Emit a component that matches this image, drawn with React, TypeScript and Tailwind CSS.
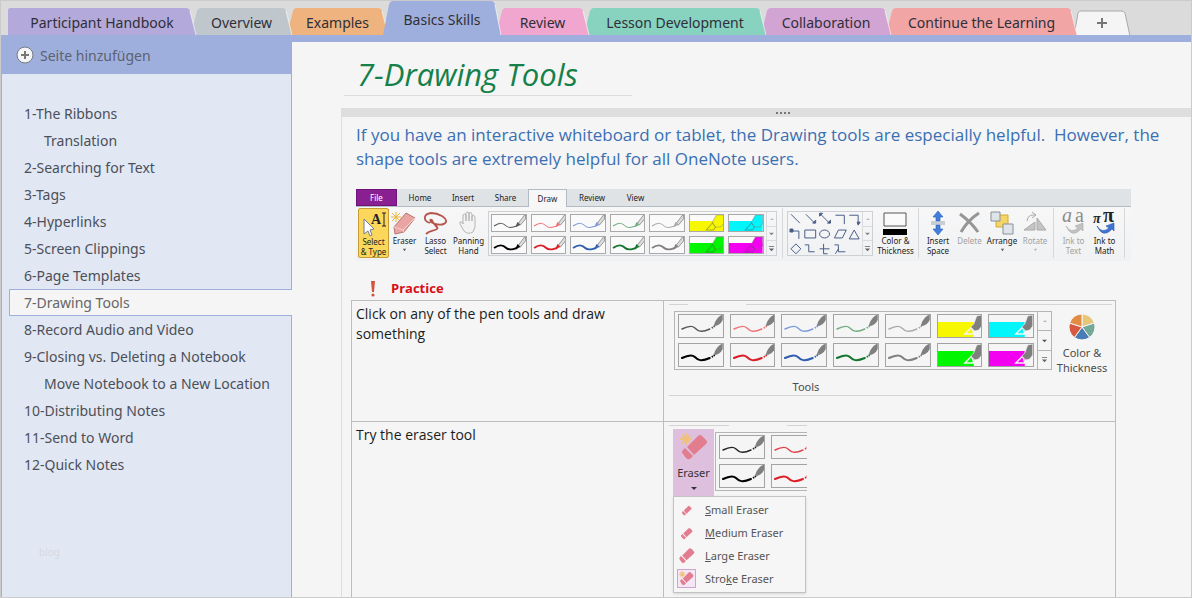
import type { ReactNode } from 'react';
import { clsx } from 'clsx';

interface Section {
  name: string;
  width: string;
  fill: string;
  bg: string;
  z: string;
  active?: boolean;
}

const sections: Section[] = [
  { name: 'Participant Handbook', width: 'w-[188px]', fill: 'fill-[#b3aadb]', bg: 'bg-[#b3aadb]', z: 'z-[8]' },
  { name: 'Overview', width: 'w-[101px]', fill: 'fill-[#bfc6cc]', bg: 'bg-[#bfc6cc]', z: 'z-[7]' },
  { name: 'Examples', width: 'w-[101px]', fill: 'fill-[#eeb37e]', bg: 'bg-[#eeb37e]', z: 'z-[6]' },
  { name: 'Basics Skills', width: 'w-[118px]', fill: 'fill-[#9fafdd]', bg: 'bg-[#9fafdd]', z: 'z-[9]', active: true },
  { name: 'Review', width: 'w-[93px]', fill: 'fill-[#f0a6cf]', bg: 'bg-[#f0a6cf]', z: 'z-[5]' },
  { name: 'Lesson Development', width: 'w-[182px]', fill: 'fill-[#88d3c0]', bg: 'bg-[#88d3c0]', z: 'z-[4]' },
  { name: 'Collaboration', width: 'w-[130px]', fill: 'fill-[#d2a4d3]', bg: 'bg-[#d2a4d3]', z: 'z-[3]' },
  { name: 'Continue the Learning', width: 'w-[191px]', fill: 'fill-[#f1a5a5]', bg: 'bg-[#f1a5a5]', z: 'z-[2]' },
];

const pages = [
  { title: '1-The Ribbons' },
  { title: 'Translation', sub: true },
  { title: '2-Searching for Text' },
  { title: '3-Tags' },
  { title: '4-Hyperlinks' },
  { title: '5-Screen Clippings' },
  { title: '6-Page Templates' },
  { title: '7-Drawing Tools', current: true },
  { title: '8-Record Audio and Video' },
  { title: '9-Closing vs. Deleting a Notebook' },
  { title: 'Move Notebook to a New Location', sub: true },
  { title: '10-Distributing Notes' },
  { title: '11-Send to Word' },
  { title: '12-Quick Notes' },
];

interface Tool {
  name: string;
  color: string;
  bold?: boolean;
  marker?: boolean;
}

const tools: Tool[] = [
  { name: 'Black pen', color: '#555555' },
  { name: 'Red pen', color: '#ee7377' },
  { name: 'Blue pen', color: '#7a9bd8' },
  { name: 'Green pen', color: '#6fae80' },
  { name: 'Gray pen', color: '#aaaaaa' },
  { name: 'Yellow highlighter', color: '#f7f700', marker: true },
  { name: 'Cyan highlighter', color: '#00f6fb', marker: true },
  { name: 'Thick black pen', color: '#000000', bold: true },
  { name: 'Thick red pen', color: '#dc1e26', bold: true },
  { name: 'Thick blue pen', color: '#2f5eb0', bold: true },
  { name: 'Thick green pen', color: '#12752f', bold: true },
  { name: 'Thick gray pen', color: '#808080', bold: true },
  { name: 'Green highlighter', color: '#00f500', marker: true },
  { name: 'Magenta highlighter', color: '#f400f0', marker: true },
];

const eraserTools: Tool[] = [
  { name: 'Black pen', color: '#222222' },
  { name: 'Red pen', color: '#e0434a' },
  tools[7],
  tools[8],
];

export default function App() {
  return (
    <div className="flex min-h-screen flex-col border border-[#cbcbcb] bg-[#f5f5f5] font-['Open_Sans','Noto_Sans',sans-serif] text-[#333]">
      <SectionTabs />
      <div className="flex flex-1">
        <PageList />
        <main className="min-w-0 flex-1 border-t-[7px] border-[#9fafdd]">
          <h1 className="ml-[52px] h-[54px] w-[288px] border-b border-[#dcdcdc] pl-[13px] text-[31px] leading-[64px] whitespace-nowrap text-[#15804a] italic">
            7-Drawing Tools
          </h1>
          <NoteContainer />
        </main>
      </div>
    </div>
  );
}

function SectionTabs() {
  return (
    <nav
      aria-label="Sections"
      className="flex h-[34px] items-end bg-[#dbdbdb] pl-[7px] font-['Noto_Sans','Open_Sans',sans-serif]"
    >
      {sections.map((s, i) => (
        <button
          key={s.name}
          className={clsx(
            'relative flex shrink-0 text-[14px] whitespace-nowrap text-[#2f2f38]',
            s.active ? 'h-[34px]' : 'h-[27px]',
            i > 0 && '-ml-[5px]',
            s.width,
            s.z
          )}
        >
          <svg viewBox="0 0 10 27" preserveAspectRatio="none" className={clsx('h-full w-[10px]', s.fill)}>
            <path d={i === 0 ? 'M0 27V2Q0 0 3 0H10V27Z' : 'M0 27L6 3Q7 0 10 0V27Z'} />
          </svg>
          <span className={clsx('flex h-full flex-1 items-center justify-center pt-[2px]', s.bg)}>{s.name}</span>
          <svg viewBox="0 0 10 27" preserveAspectRatio="none" className={clsx('h-full w-[10px] overflow-visible', s.fill)}>
            <path d="M0 0Q3 0 4 3L10 27H0Z" />
            <path d="M4 3L10 27" className="fill-none stroke-white/60" />
          </svg>
        </button>
      ))}
      <button aria-label="New section" className="relative z-[1] -ml-[4px] h-[25px] w-[58px] shrink-0">
        <svg viewBox="0 0 58 25" className="h-full w-full">
          <path d="M1 26L5 3Q6 1 8 1H48Q51 1 52 3L57 26" fill="#f5f5f5" stroke="#a9a9a9" />
          <path d="M24 13H34M29 8V18" stroke="#777" strokeWidth="2" />
        </svg>
      </button>
    </nav>
  );
}

function PageList() {
  return (
    <aside className="flex w-[291px] shrink-0 flex-col border-l border-[#9fafdd] bg-[#e1e7f3] font-['Noto_Sans','Open_Sans',sans-serif] text-[14px]">
      <button className="flex h-[39px] items-center gap-[6px] bg-[#9fafdd] pl-[14px] text-[#5c6270]">
        <svg viewBox="0 0 18 18" className="h-[18px] w-[18px]">
          <circle cx="9" cy="9" r="8" fill="#f5f5f5" stroke="#747a85" />
          <path d="M5 9H13M9 5V13" stroke="#777" strokeWidth="2" />
        </svg>
        <span className="pt-[2px]">Seite hinzufügen</span>
      </button>
      <nav aria-label="Pages" className="flex flex-1 flex-col">
        <div className="h-[26px] border-r border-[#9fafdd]" />
        {pages.map((p) => (
          <a
            key={p.title}
            href="#"
            aria-current={p.current ? 'page' : undefined}
            className={clsx(
              'flex h-[27px] items-center whitespace-nowrap',
              p.current
                ? 'ml-[7px] border-y border-l border-[#9fafdd] bg-[#f5f5f5] pl-[14px] text-[#666]'
                : 'border-r border-[#9fafdd] text-[#4c4f58]',
              !p.current && (p.sub ? 'pl-[42px]' : 'pl-[22px]')
            )}
          >
            {p.title}
          </a>
        ))}
        <div className="flex-1 border-r border-[#9fafdd] pt-[67px] pl-[37px] text-[10px] text-[#d5d9e2]">blog</div>
      </nav>
    </aside>
  );
}

function NoteContainer() {
  return (
    <section className="mt-[12px] ml-[49px] border-l border-[#dedede]">
      <div className="flex h-[9px] items-center justify-center gap-[2px] bg-[#dedede] pl-[32px]">
        <Dot />
        <Dot />
        <Dot />
        <Dot />
      </div>
      <p className="mt-[6px] pr-[10px] pl-[14px] text-[17px] leading-[24px] text-[#3a6fb3]">
        If you have an interactive whiteboard or tablet, the Drawing tools are especially helpful.&nbsp; However, the
        shape tools are extremely helpful for all OneNote users.
      </p>
      <Ribbon />
      <div className="mt-[18px] flex h-[20px] items-center gap-[15px] pl-[28px]">
        <svg viewBox="0 0 6 16" className="h-[16px] w-[6px] fill-[#d2553a]">
          <path d="M1 0H5L4 11H2Z" />
          <circle cx="3" cy="14" r="1.6" />
        </svg>
        <h2 className="text-[13px] font-bold text-[#d80f14]">Practice</h2>
      </div>
      <table className="mt-px ml-[9px] w-[765px] table-fixed border-collapse text-[14px] leading-[20px] text-[#1c1c1c]">
        <tbody>
          <tr className="h-[121px]">
            <td className="w-[312px] border border-[#bdbdbd] px-[4px] pt-[3px] align-top">
              Click on any of the pen tools and draw something
            </td>
            <td className="border border-[#bdbdbd] p-0 align-top">
              <ToolsClip />
            </td>
          </tr>
          <tr>
            <td className="border border-b-0 border-[#bdbdbd] px-[4px] pt-[3px] align-top">Try the eraser tool</td>
            <td className="border border-b-0 border-[#bdbdbd] p-0 pb-[4px] align-top">
              <EraserClip />
            </td>
          </tr>
        </tbody>
      </table>
    </section>
  );
}

function Dot() {
  return <span className="h-[2px] w-[2px] bg-[#777]" />;
}

// OneNote 2010 ribbon
function Ribbon() {
  return (
    <div className="mt-[18px] ml-[14px] w-[775px] font-['Noto_Sans','Open_Sans',sans-serif] text-[8px] text-[#222]">
      <div className="flex h-[18px] border-b border-[#b3bac2] bg-[#dfe3e6]">
        <button className="w-[41px] border border-[#6d1379] bg-[#8a1f92] text-white">File</button>
        <RibbonTab className="w-[46px]">Home</RibbonTab>
        <RibbonTab className="w-[40px]">Insert</RibbonTab>
        <RibbonTab className="w-[45px]">Share</RibbonTab>
        <button className="-mb-px w-[39px] border border-b-0 border-[#b3bac2] bg-[#f7f7f8]">Draw</button>
        <RibbonTab className="w-[50px]">Review</RibbonTab>
        <RibbonTab className="w-[37px]">View</RibbonTab>
      </div>
      <div className="flex h-[54px] items-start bg-linear-to-b from-[#f7f7f8] to-[#f0f1f2] pt-px pl-[2px]">
        <RibbonButton label={['Select', '& Type']} className="h-[50px] w-[31px] rounded-xs border border-[#c79b35] bg-[#fbd75c]">
          <path d="M4 8V23L8 20L10 25L12 24L10 19L14 18Z" fill="#fff" stroke="#6f7d92" />
          <text x="11" y="13" className="fill-[#222] font-['Liberation_Serif',serif] text-[14px] font-bold">A</text>
          <path d="M22 2H26M24 2V15M22 15H26" stroke="#222" fill="none" />
        </RibbonButton>
        <RibbonButton label={['Eraser']} arrow className="w-[31px]">
          <path d="M5 2V12M0 7H10M1 3L9 11M9 3L1 11" stroke="#eab53a" />
          <path d="M3 17L15 3L24 8L13 22L4 24Z" fill="#e9a5a3" stroke="#b87873" />
          <path d="M3 17L12 20L24 8M12 20L13 22" stroke="#f8d1cd" fill="none" />
        </RibbonButton>
        <RibbonButton label={['Lasso', 'Select']} className="w-[31px]">
          <path
            d="M8 13C1 11 1 4 9 3C17 3 25 8 24 12C22 16 13 15 9 12C7 9 10 9 11 12C13 17 19 18 13 20C10 21 7 21 4 24"
            fill="none"
            stroke="#b6534a"
            strokeWidth="1.8"
          />
        </RibbonButton>
        <RibbonButton label={['Panning', 'Hand']} className="w-[35px]">
          <path
            d="M9 21L5 14Q4 11 7 12L8 14V5Q9 3 11 5V11V3Q12 1 14 3V11V3Q16 1 17 4V11V6Q19 4 20 7V17L18 22Q13 25 9 21Z"
            fill="#f3f3f3"
            stroke="#b5b5b5"
          />
        </RibbonButton>
        <div className="mt-[3px] ml-[2px] flex h-[45px] w-[289px] border border-[#cdd0d4]">
          <div className="grid w-[277px] grid-cols-7 gap-1 p-[2px]">
            {tools.map((t) => (
              <OldTool key={t.name} tool={t} />
            ))}
          </div>
          <Scroller className="w-[10px] border-[#d9dbde]" faded />
        </div>
        <Divider className="ml-[5px]" />
        <div className="mt-[3px] ml-[4px] flex h-[45px] w-[86px] border border-[#cdd0d4]">
          <svg viewBox="0 0 75 43" className="h-[43px] w-[75px] fill-none stroke-[#475c88]">
            <path d="M3 2L12 11M18 2L27 11M33 2L42 11M48 3H57V12M62 3H71V12" />
            <path d="M25 11H28V8ZM32 4V1H35ZM40 11H43V8ZM70 10H73L71 13ZM2 17H5V20H2Z" fill="#475c88" />
            <path d="M4 19H11V27M17 18H28V26H17ZM51 18H59L55 26H47ZM67 18L72 27H62Z" />
            <ellipse cx="37" cy="22" rx="5" ry="4" />
            <path d="M8 32L13 37L8 42L3 37ZM17 33H21V40H27M32 37H42M36 32V42H40M47 33H51V40H58M51 37L48 42" />
          </svg>
          <Scroller className="w-[10px] border-[#d9dbde]" faded />
        </div>
        <RibbonButton label={['Color &', 'Thickness']} className="w-[45px]">
          <path d="M2 3H24V16H2Z" fill="#fafafa" stroke="#555" />
          <path d="M1 19H25V25H1Z" fill="#000" />
        </RibbonButton>
        <Divider className="" />
        <RibbonButton label={['Insert', 'Space']} className="ml-[3px] w-[32px]">
          <path d="M13 1L18 7H15V11H11V7H8ZM13 25L18 19H15V15H11V19H8Z" fill="#3f7fe0" stroke="#2b5db0" strokeWidth=".6" />
          <path d="M6 12H20M6 14H20" stroke="#9aa6b5" />
        </RibbonButton>
        <RibbonButton label={['Delete']} className="w-[31px] text-[#a2a2a2]">
          <path d="M4 4Q15 12 22 22M23 3Q12 10 5 22" stroke="#969696" strokeWidth="3" fill="none" />
        </RibbonButton>
        <RibbonButton label={['Arrange']} arrow className="w-[34px]">
          <path d="M7 5H19V17H7Z" fill="#f5d565" stroke="#d2ac35" />
          <path d="M2 2H11V11H2ZM14 14H24V24H14Z" fill="#dfe4e9" stroke="#87909a" />
        </RibbonButton>
        <RibbonButton label={['Rotate']} arrow className="w-[32px] text-[#a2a2a2]">
          <path d="M2 20L13 12V20ZM15 8L24 20H15Z" fill="#c4c4c4" stroke="#aaa" />
          <path d="M5 11Q6 4 13 5M10 2L14 5L10 8" fill="none" stroke="#aaa" />
        </RibbonButton>
        <Divider className="ml-[2px]" />
        <RibbonButton label={['Ink to', 'Text']} className="ml-[4px] w-[31px] text-[#a2a2a2]">
          <text x="2" y="12" className="fill-[#8d8d8d] font-['Liberation_Serif',serif] text-[20px] italic">a</text>
          <text x="15" y="12" className="fill-[#8d8d8d] font-['Liberation_Serif',serif] text-[20px]">a</text>
          <path d="M6 16Q11 24 18 18L15 16L23 13V21L21 19Q12 29 6 16Z" fill="#c2c2c2" stroke="#aaa" strokeWidth=".6" />
        </RibbonButton>
        <RibbonButton label={['Ink to', 'Math']} className="w-[31px]">
          <text x="2" y="13" className="fill-[#222] font-['Liberation_Serif',serif] text-[14px] font-bold italic">π</text>
          <text x="12" y="12" className="fill-[#222] font-['Liberation_Serif',serif] text-[20px] font-bold">π</text>
          <path d="M6 16Q11 24 18 18L15 16L23 13V21L21 19Q12 29 6 16Z" fill="#3f74d4" stroke="#2b5db0" strokeWidth=".6" />
        </RibbonButton>
        <Divider className="ml-[4px]" />
      </div>
    </div>
  );
}

function RibbonTab({ children, className }: { children: ReactNode; className: string }) {
  return <button className={className}>{children}</button>;
}

function RibbonButton({
  children,
  label,
  arrow,
  className,
}: {
  children: ReactNode;
  label: string[];
  arrow?: boolean;
  className: string;
}) {
  return (
    <button className={clsx('flex shrink-0 flex-col items-center pt-[2px] leading-[10px] whitespace-nowrap', className)}>
      <svg viewBox="0 0 27 26" className="h-[26px] w-[27px] shrink-0 overflow-visible">
        {children}
      </svg>
      {label.map((line) => (
        <span key={line}>{line}</span>
      ))}
      {arrow && (
        <svg viewBox="0 0 6 6" className="mt-[2px] h-[5px] w-[5px] fill-current opacity-70">
          <path d="M1 1H5L3 4Z" />
        </svg>
      )}
    </button>
  );
}

function Divider({ className }: { className: string }) {
  return <div className={clsx('h-[50px] w-px shrink-0 bg-[#d5d8db]', className)} />;
}

function Scroller({ className, faded }: { className: string; faded?: boolean }) {
  return (
    <div className={clsx('flex flex-col border-l', className)}>
      <button aria-label="Scroll up" className="flex flex-1 items-center justify-center">
        <svg viewBox="0 0 6 6" className="h-[6px] w-[6px] fill-[#bbb]">
          <path d="M1 4H5L3 2Z" />
        </svg>
      </button>
      <button
        aria-label="Scroll down"
        className={clsx(
          'flex flex-1 items-center justify-center border-y',
          faded ? 'border-[#d9dbde]' : 'border-[#b5b5b5]'
        )}
      >
        <svg viewBox="0 0 6 6" className={clsx('h-[5px] w-[5px]', faded ? 'fill-[#888]' : 'fill-[#555]')}>
          <path d="M0 2H6L3 5Z" />
        </svg>
      </button>
      <button aria-label="More" className="flex flex-1 items-center justify-center">
        <svg viewBox="0 0 8 8" className="h-[7px] w-[7px] fill-[#666]">
          <path d="M1 1H7V2H1ZM1 4H7L4 7Z" />
        </svg>
      </button>
    </div>
  );
}

function OldTool({ tool }: { tool: Tool }) {
  return (
    <button aria-label={tool.name} className="h-[18px] border border-[#a9a9a9] bg-[#fafafa]">
      <svg viewBox="0 0 33 16" preserveAspectRatio="none" className="h-full w-full">
        {tool.marker ? (
          <>
            <path d="M0 6H33V16H0Z" fill={tool.color} />
            <path d="M33 0H26L22 7L24 12H30L33 9Z" fill={tool.color} stroke="#777" strokeOpacity=".4" />
            <path d="M22 8L16 15H23L25 12Z" fill={tool.color} stroke="#444" strokeOpacity=".4" />
          </>
        ) : (
          <>
            <path
              d="M2 11C8 7 11 8 14 11S20 12 25 11"
              fill="none"
              stroke={tool.color}
              strokeWidth={tool.bold ? 1.9 : 1}
            />
            <path d="M26 8L32 0H33V4L28 10Z" fill="#dcdcdc" stroke="#777" strokeWidth=".7" />
            <path d="M23 12L25 7L28 10Z" fill={tool.color} />
          </>
        )}
      </svg>
    </button>
  );
}

function FlatTool({ tool }: { tool: Tool }) {
  return (
    <button aria-label={tool.name} className="h-[24px] border border-[#a3a3a3]">
      <svg viewBox="0 0 44 22" preserveAspectRatio="none" className="h-full w-full">
        {tool.marker ? (
          <>
            <path d="M0 7H36V22H0Z" fill={tool.color} />
            <path d="M27 19L34 12L36 19Z" fill={tool.color} stroke="#f5f5f5" strokeWidth="1.4" />
            <path d="M33 12L36 9L39 1L44 0V11L41 15L37 16Z" fill="#7f7f7f" stroke="#f5f5f5" strokeWidth=".6" />
          </>
        ) : (
          <>
            <path
              d="M3 14C9 11 13 10 16 13S22 18 31 14"
              fill="none"
              stroke={tool.color}
              strokeWidth={tool.bold ? 2 : 1.4}
              strokeLinecap="round"
            />
            <path d="M33 13L36 11" stroke={tool.color} strokeWidth="2" strokeDasharray="1.4 .8" />
            <path d="M35 11C36 6 39 2 43 0H44V5C42 9 39 11 35 11Z" fill="#7f7f7f" />
          </>
        )}
      </svg>
    </button>
  );
}

// pen gallery of the newer ribbon
function ToolsClip() {
  return (
    <div className="ml-[5px] w-[443px] pt-[3px] font-['Noto_Sans','Open_Sans',sans-serif] text-[11px] leading-[15px] text-[#4c4c4c]">
      <div className="flex justify-between">
        <div className="w-[19px] border-t border-[#d4d4d4]" />
        <div className="w-[366px] border-t border-[#d4d4d4]" />
      </div>
      <div className="mt-[6px] ml-[5px] flex">
        <div>
          <div className="flex h-[59px] w-[378px] border border-[#b5b5b5]">
            <div className="grid w-[362px] grid-cols-7 gap-x-[6px] gap-y-[5px] px-[3px] py-[2px]">
              {tools.map((t) => (
                <FlatTool key={t.name} tool={t} />
              ))}
            </div>
            <Scroller className="w-[14px] border-[#b5b5b5]" />
          </div>
          <p className="mt-[9px] pr-[114px] text-center">Tools</p>
        </div>
        <button className="ml-[5px] flex h-[65px] w-[50px] flex-col items-center pt-[2px]">
          <svg viewBox="0 0 28 28" className="mb-[4px] h-[28px] w-[28px] shrink-0 stroke-[#f5f5f5]">
            <path d="M14 14V1A13 13 0 0 1 26.4 10Z" fill="#e8c678" />
            <path d="M14 14L26.4 10A13 13 0 0 1 21.6 24.5Z" fill="#72a999" />
            <path d="M14 14L21.6 24.5A13 13 0 0 1 6.4 24.5Z" fill="#4a7db5" />
            <path d="M14 14L6.4 24.5A13 13 0 0 1 1.6 10Z" fill="#d7593f" />
            <path d="M14 14L1.6 10A13 13 0 0 1 14 1Z" fill="#e18c42" />
          </svg>
          <span className="whitespace-nowrap">Color &amp;</span>
          <span className="whitespace-nowrap">Thickness</span>
        </button>
      </div>
      <div className="mt-px border-b border-[#d4d4d4]" />
    </div>
  );
}

function EraserIcon({ className, sparkle }: { className: string; sparkle?: boolean }) {
  return (
    <svg viewBox="0 0 28 28" className={clsx('shrink-0', className)}>
      <path d="M18 3Q20 1 22 3L26 7Q28 9 26 11L14 22L7 14Z" fill="#e27d90" />
      <path d="M5 15L13 23L10 26Q8 27 6 25L3 21Q1 19 3 17Z" fill="#e27d90" />
      {sparkle && <path d="M6 0V12M0 6H12M2 2L10 10M10 2L2 10" stroke="#efc27c" strokeWidth="2" />}
    </svg>
  );
}

function EraserClip() {
  return (
    <div className="ml-[5px] w-[138px] pt-[3px] font-['Noto_Sans','Open_Sans',sans-serif] text-[11px] text-[#555]">
      <div className="flex justify-between">
        <div className="w-[60px] border-t border-[#d4d4d4]" />
        <div className="w-[20px] border-t border-[#d4d4d4]" />
      </div>
      <div className="ml-[4px] flex overflow-hidden pt-[3px]">
        <button className="flex h-[67px] w-[41px] shrink-0 flex-col items-center bg-[#dfbfde] pt-[4px] text-[#333]">
          <EraserIcon className="h-[28px] w-[28px]" sparkle />
          <span className="leading-[24px]">Eraser</span>
          <svg viewBox="0 0 6 6" className="mt-[1px] h-[6px] w-[6px] fill-[#333]">
            <path d="M0 1H6L3 4Z" />
          </svg>
        </button>
        <div className="mt-[3px] ml-px h-[59px] w-[92px] overflow-hidden border border-r-0 border-[#b5b5b5]">
          <div className="grid w-[104px] grid-cols-2 gap-x-[6px] gap-y-[5px] px-[3px] py-[2px]">
            {eraserTools.map((t) => (
              <FlatTool key={t.name} tool={t} />
            ))}
          </div>
        </div>
      </div>
      <div role="menu" className="ml-[4px] flex h-[97px] w-[133px] flex-col border border-[#c2c2c2] bg-[#f6f6f6] py-[2px] shadow-sm">
        <EraserItem icon={<EraserIcon className="h-[11px] w-[11px]" />}>
          <u>S</u>mall Eraser
        </EraserItem>
        <EraserItem icon={<EraserIcon className="h-[13px] w-[13px]" />}>
          <u>M</u>edium Eraser
        </EraserItem>
        <EraserItem icon={<EraserIcon className="h-[17px] w-[17px]" />}>
          <u>L</u>arge Eraser
        </EraserItem>
        <EraserItem icon={<EraserIcon className="h-[15px] w-[15px]" sparkle />} selected>
          Stro<u>k</u>e Eraser
        </EraserItem>
      </div>
    </div>
  );
}

function EraserItem({ icon, children, selected }: { icon: ReactNode; children: ReactNode; selected?: boolean }) {
  return (
    <button role="menuitem" className="flex h-[23px] items-center gap-[9px] pl-[3px] whitespace-nowrap">
      <span
        className={clsx(
          'flex h-[19px] w-[19px] items-center justify-center',
          selected && 'border border-[#cfa3cf] bg-[#f5e6f5]'
        )}
      >
        {icon}
      </span>
      <span>{children}</span>
    </button>
  );
}
